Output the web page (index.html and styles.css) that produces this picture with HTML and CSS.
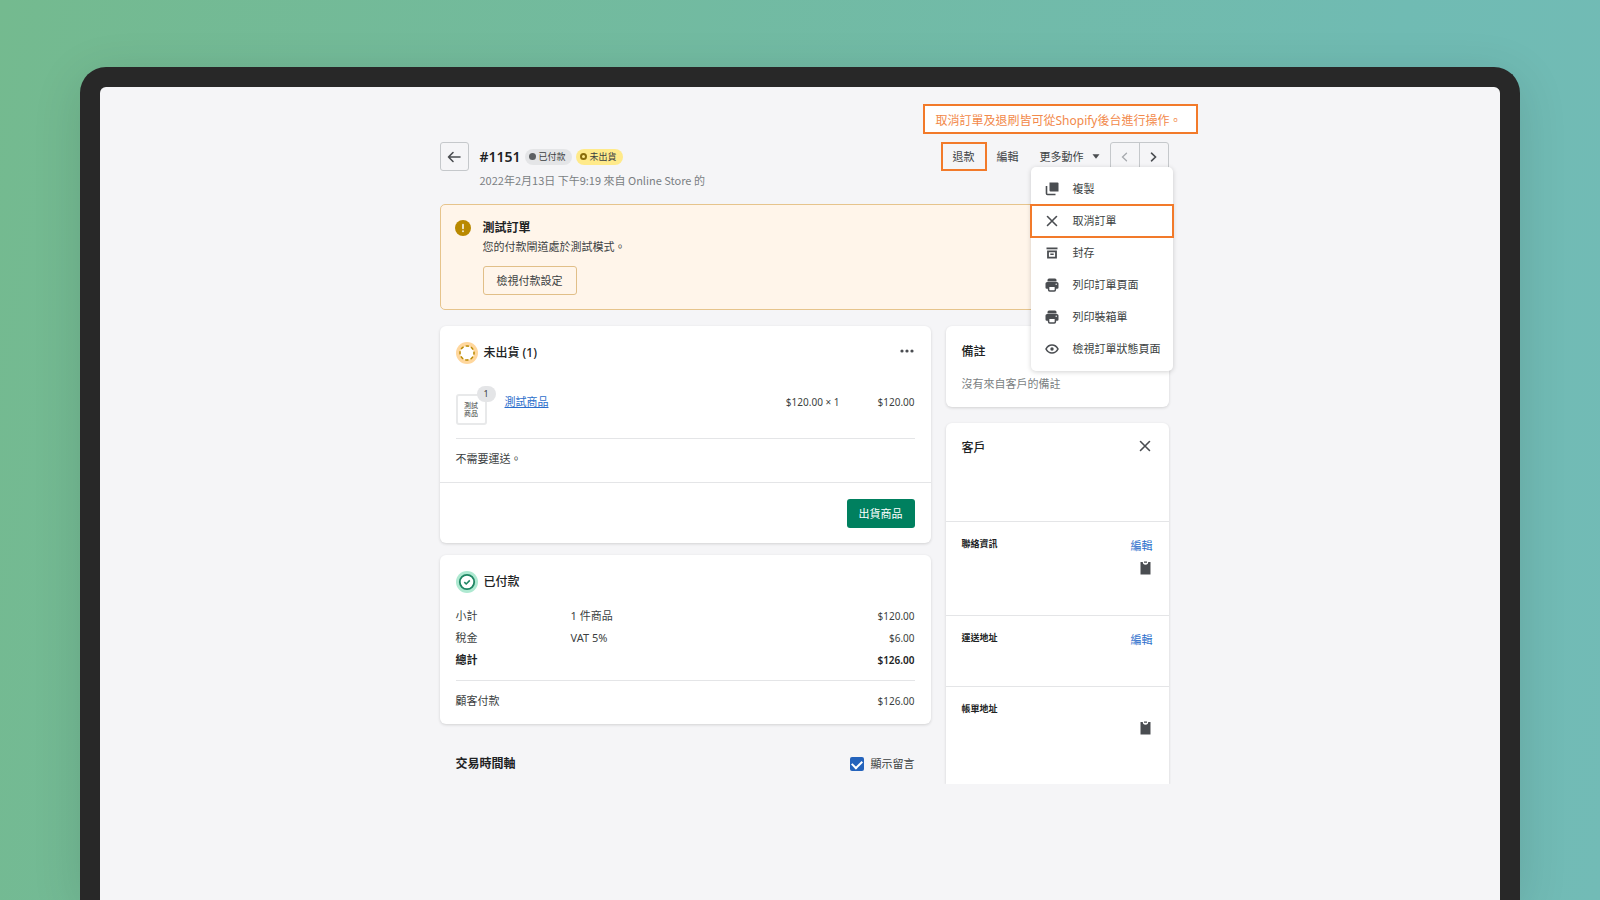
FILE: index.html
```
<!DOCTYPE html>
<html lang="zh-TW">
<head>
<meta charset="utf-8">
<meta name="viewport" content="width=device-width, initial-scale=1">
<title>#1151</title>
<link rel="stylesheet" href="styles.css">
</head>
<body>
<svg class="sprite" aria-hidden="true">
  <symbol id="i-print" viewBox="0 0 14 14"><path d="M4 .5h6A1.500 1.500 0 0 1 11.500 2v1.500h-9V2A1.500 1.500 0 0 1 4 .5z" fill="#4a4d51"/><path d="M2.200 3.900h9.600A1.700 1.700 0 0 1 13.500 5.600v3.900a1.200 1.200 0 0 1-1.200 1.200H1.700A1.200 1.200 0 0 1 .5 9.500V5.600a1.700 1.700 0 0 1 1.700-1.700z" fill="#4a4d51"/><path d="M3.600 8.300h6.800v3.500a1.200 1.200 0 0 1-1.200 1.200H4.800a1.200 1.200 0 0 1-1.200-1.200z" fill="#fff" stroke="#4a4d51" stroke-width="1.500"/><circle cx="11.200" cy="6.300" r=".7" fill="#fff"/></symbol>
  <symbol id="i-x" viewBox="0 0 12 12"><path d="M1.500 1.500l9 9M10.500 1.500l-9 9" fill="none" stroke="#4a4d51" stroke-width="1.600" stroke-linecap="round"/></symbol>
  <symbol id="i-clip" viewBox="0 0 11 14"><path d="M.5 1h2.300a2.700 2.700 0 0 0 5.400 0h2.300v12.500H.5z" fill="#4a4d51"/><path d="M4 .5h3v1.300H4z" fill="#4a4d51"/></symbol>
</svg>
<div class="device">
  <main class="order">
    <p class="callout">取消訂單及退刷皆可從Shopify後台進行操作。</p>

    <header class="head">
      <button class="square" aria-label="返回"><svg width="14" height="12" viewBox="0 0 14 12"><path d="M13 6H1.500M6 1.500L1.500 6 6 10.500" fill="none" stroke="#4a4d51" stroke-width="1.600" stroke-linecap="round" stroke-linejoin="round"/></svg></button>
      <div class="head-text">
        <div class="title-row">
          <h1>#1151</h1>
          <span class="badge"><i class="dot"></i>已付款</span>
          <span class="badge badge-warn"><i class="dot ring"></i>未出貨</span>
        </div>
        <p class="meta">2022年2月13日 下午9:19 來自 Online Store 的</p>
      </div>
      <div class="actions">
        <button class="plain marked">退款</button>
        <button class="plain">編輯</button>
        <button class="plain more">更多動作<svg width="8" height="5" viewBox="0 0 8 5"><path d="M.5.300h7L4 4.700z" fill="#4a4d51"/></svg></button>
        <div class="pager">
          <button aria-label="上一筆"><svg width="7" height="10" viewBox="0 0 7 10"><path d="M5.500 1.200L1.500 5l4 3.800" fill="none" stroke="#a6a9ad" stroke-width="1.300" stroke-linecap="round"/></svg></button>
          <button aria-label="下一筆"><svg width="7" height="10" viewBox="0 0 7 10"><path d="M1.500 1.200L5.500 5l-4 3.800" fill="none" stroke="#4a4d51" stroke-width="1.600" stroke-linecap="round"/></svg></button>
        </div>
        <div class="menu">
          <button><svg width="14" height="14" viewBox="0 0 14 14"><path d="M4.500.5h8a1 1 0 0 1 1 1v8h-8a1 1 0 0 1-1-1z" fill="#4a4d51"/><path d="M1.500 4v7.500a1 1 0 0 0 1 1H10.500" fill="none" stroke="#4a4d51" stroke-width="1.600"/></svg>複製</button>
          <button class="marked"><svg width="12" height="12"><use href="#i-x"/></svg>取消訂單</button>
          <button><svg width="12" height="12" viewBox="0 0 12 12"><path d="M.5.5h11v1.800H.5z" fill="#4a4d51"/><path d="M2 4.300h8v6.400H2z" fill="none" stroke="#4a4d51" stroke-width="1.800"/><path d="M4.300 6.500h3.400V8H4.300z" fill="#4a4d51"/></svg>封存</button>
          <button><svg width="14" height="14"><use href="#i-print"/></svg>列印訂單頁面</button>
          <button><svg width="14" height="14"><use href="#i-print"/></svg>列印裝箱單</button>
          <button><svg width="14" height="10" viewBox="0 0 14 10"><path d="M1 5c1.400-2.700 3.500-4 6-4s4.600 1.300 6 4c-1.400 2.700-3.500 4-6 4S2.400 7.700 1 5z" fill="none" stroke="#4a4d51" stroke-width="1.600"/><circle cx="7" cy="5" r="1.700" fill="#4a4d51"/></svg>檢視訂單狀態頁面</button>
        </div>
      </div>
    </header>

    <section class="banner">
      <svg width="16" height="16" viewBox="0 0 16 16"><circle cx="8" cy="8" r="8" fill="#b98900"/><path d="M8 4.500v4M8 11v.4" stroke="#fff" stroke-width="1.500" stroke-linecap="round"/></svg>
      <div>
        <h2>測試訂單</h2>
        <p>您的付款閘道處於測試模式。</p>
        <button class="outline">檢視付款設定</button>
      </div>
    </section>

    <div class="columns">
      <div class="col-main">
        <section class="card items">
          <div class="card-head">
            <svg width="22" height="22" viewBox="0 0 22 22"><circle cx="11" cy="11" r="11" fill="#ffd79d"/><circle cx="11" cy="11" r="7" fill="#fff" stroke="#b98900" stroke-width="1.500" stroke-dasharray="3.300 2.200" stroke-dashoffset="1.600"/></svg>
            <h2>未出貨 (1)</h2>
            <button class="icon-btn" aria-label="更多"><svg width="14" height="4" viewBox="0 0 14 4" fill="#4a4d51"><circle cx="2" cy="2" r="1.600"/><circle cx="7" cy="2" r="1.600"/><circle cx="12" cy="2" r="1.600"/></svg></button>
          </div>
          <div class="product">
            <div class="thumb">測試<br>商品<span class="count">1</span></div>
            <a href="#">測試商品</a>
            <span class="unit">$120.00 × 1</span>
            <span class="sum">$120.00</span>
          </div>
          <p class="ship-note">不需要運送。</p>
          <div class="card-foot"><button class="primary">出貨商品</button></div>
        </section>

        <section class="card paid">
          <div class="card-head">
            <svg width="22" height="22" viewBox="0 0 22 22"><circle cx="11" cy="11" r="11" fill="#aee9d1"/><circle cx="11" cy="11" r="7.200" fill="#fff" stroke="#1f8563" stroke-width="1.800"/><path d="M8.300 11.200l1.900 1.800 3.600-3.600" fill="none" stroke="#1f8563" stroke-width="1.600"/></svg>
            <h2>已付款</h2>
          </div>
          <table>
            <tbody>
              <tr><th scope="row">小計</th><td>1 件商品</td><td>$120.00</td></tr>
              <tr><th scope="row">稅金</th><td>VAT 5%</td><td>$6.00</td></tr>
              <tr class="total"><th scope="row">總計</th><td></td><td>$126.00</td></tr>
            </tbody>
          </table>
          <div class="paid-by"><span>顧客付款</span><span class="sum">$126.00</span></div>
        </section>

        <div class="timeline">
          <h2>交易時間軸</h2>
          <label><input type="checkbox" checked>顯示留言</label>
        </div>
      </div>

      <aside class="col-side">
        <section class="card notes">
          <h2>備註</h2>
          <p>沒有來自客戶的備註</p>
        </section>
        <section class="card customer">
          <div class="block block-name"><h2>客戶</h2><button class="icon-btn" aria-label="移除客戶"><svg width="12" height="12"><use href="#i-x"/></svg></button></div>
          <div class="block block-contact"><h3>聯絡資訊</h3><div class="tools"><a href="#">編輯</a><button class="icon-btn" aria-label="複製聯絡資訊"><svg width="11" height="14"><use href="#i-clip"/></svg></button></div></div>
          <div class="block block-ship"><h3>運送地址</h3><div class="tools"><a href="#">編輯</a></div></div>
          <div class="block block-bill"><h3>帳單地址</h3><div class="tools low"><button class="icon-btn" aria-label="複製帳單地址"><svg width="11" height="14"><use href="#i-clip"/></svg></button></div></div>
        </section>
      </aside>
    </div>
  </main>
</div>
</body>
</html>
```
FILE: styles.css
```
* { box-sizing: border-box; }
body {
  margin: 0;
  min-height: 100vh;
  display: flex;
  flex-direction: column;
  overflow: hidden;
  background: linear-gradient(100deg, #74ba8f 0%, #70bbb3 80%, #72bbb6 100%);
  color: #3c3f42;
  font: 11px/16px "Noto Sans", "Noto Sans CJK TC", sans-serif;
}
h1, h2, h3, p { margin: 0; }
h2 { font-size: 12px; line-height: 16px; font-weight: 500; color: #202223; }
h3 { font-size: 9px; line-height: 16px; font-weight: 700; color: #202223; }
button { margin: 0; padding: 0; border: 0; background: none; font: inherit; color: inherit; }
svg { display: block; flex: none; }
a { color: #2c6ecb; }
.sprite { position: absolute; width: 0; height: 0; }

.device {
  flex: 1;
  margin: 67px 5% 0;
  border: 20px solid #282828;
  border-bottom: 0;
  border-radius: 26px 26px 0 0;
  background: #f5f5f7;
  box-shadow: 0 10px 50px rgba(0, 0, 0, .12);
}
.order { max-width: 737px; margin: 0 auto; padding: 17px 0 0 8px; }

.callout {
  width: fit-content;
  margin: 0 -29px 0 auto;
  padding: 7px 14px 3px 11px;
  border: 2px solid #f27a2a;
  background: #fff;
  color: #f2894a;
  font-size: 12px;
  line-height: 16px;
}

.head { display: flex; align-items: flex-start; margin-top: 8px; }
.square {
  width: 29px; height: 29px;
  display: grid; place-items: center;
  border: 1px solid #c5c8cb; border-radius: 3px;
}
.head-text { flex: 1; margin-left: 11px; }
.title-row { display: flex; align-items: center; gap: 4px; height: 29px; }
h1 { font-size: 14px; line-height: 20px; font-weight: 600; color: #202223; }
.badge {
  display: flex; align-items: center; gap: 3px;
  height: 16px; padding: 0 6px 0 4px;
  border-radius: 8px;
  background: #e4e5e7;
  font-size: 9px;
}
.badge-warn { background: #ffea8a; }
.dot { width: 7px; height: 7px; border-radius: 50%; background: #5c5f62; }
.ring { background: none; border: 2px solid #8a6d0a; }
.meta { margin-top: 1px; color: #7b7f83; font-family: "Noto Sans CJK TC", sans-serif; }

.actions { position: relative; display: flex; align-items: flex-start; }
.plain { height: 29px; padding: 0 10px; }
.plain.marked { width: 46px; border: 2px solid #f27a2a; }
.more { display: flex; align-items: center; gap: 8px; margin-left: 1px; }
.pager { display: flex; border: 1px solid #c5c8cb; border-radius: 3px; }
.pager button { width: 28px; height: 27px; display: grid; place-items: center; }
.pager button + button { width: 29px; border-left: 1px solid #c5c8cb; }
.menu {
  position: absolute; top: 25px; right: -4px; z-index: 2;
  width: 142px; padding: 6px 0;
  border-radius: 5px;
  background: #fff;
  box-shadow: 0 1px 5px rgba(0, 0, 0, .18);
}
.menu button {
  display: grid; grid-template-columns: 42px 1fr; align-items: center;
  width: 100%; height: 32px;
  text-align: left;
}
.menu svg { justify-self: center; }
.menu .marked { outline: 2px solid #f27a2a; outline-offset: -1px; }

.banner {
  display: flex; gap: 12px;
  margin-top: 16px; padding: 15px 14px 14px;
  border: 1px solid #e6c48c; border-radius: 5px;
  background: #fff5ea;
}
.banner h2, .timeline h2 { font-weight: 600; }
.banner p { margin-top: 3px; }
.outline {
  height: 29px; margin-top: 11px; padding: 0 13px;
  border: 1px solid #e1bf88; border-radius: 3px;
}

.columns { display: grid; grid-template-columns: minmax(0, 491fr) minmax(0, 223fr); gap: 15px; margin-top: 16px; }
.card {
  border-radius: 6px;
  background: #fff;
  box-shadow: 0 1px 3px rgba(23, 24, 24, .16);
}
.card-head { display: flex; align-items: center; gap: 6px; }
.icon-btn { display: block; }
.card-head .icon-btn { margin: 0 1px 4px auto; }

.items .card-head { padding: 16px 16px 0; }
.product {
  display: flex; align-items: flex-start;
  margin: 22px 16px 0; padding: 8px 0 13px;
  border-bottom: 1px solid #e4e5e7;
}
.thumb {
  position: relative;
  width: 31px; height: 31px; margin-right: 18px; padding-top: 6px;
  border: 2px solid #e8e9ea; border-radius: 3px;
  font-size: 7px; line-height: 8px; text-align: center;
}
.count {
  position: absolute; top: -10px; right: -11px;
  width: 19px; height: 16px; border-radius: 8px;
  background: #e4e5e7;
  font-size: 9px; line-height: 16px;
}
.unit { margin-left: auto; }
.unit, .sum { font-size: 10px; }
.sum { width: 75px; text-align: right; }
.ship-note { padding: 12px 16px 15px; }
.card-foot { display: flex; justify-content: flex-end; padding: 16px 16px 15px; border-top: 1px solid #e4e5e7; }
.primary { height: 29px; padding: 0 12px; border-radius: 3px; background: #00805f; color: #fff; }

.paid { margin-top: 12px; padding: 16px 16px 15px; }
table { width: 100%; margin-top: 12px; border-collapse: collapse; table-layout: fixed; }
th, td { height: 22px; padding: 0; text-align: left; font-weight: 400; }
th { width: 115px; }
td:last-child { text-align: right; font-size: 10px; }
.total th, .total td { font-weight: 600; color: #202223; }
.paid-by { display: flex; justify-content: space-between; margin-top: 9px; padding-top: 12px; border-top: 1px solid #e4e5e7; }

.timeline { display: flex; justify-content: space-between; padding: 32px 16px 0; }
label { display: flex; align-items: center; gap: 7px; }
input {
  appearance: none;
  width: 14px; height: 14px; margin: 0;
  border-radius: 2px;
  background: #2463bc;
  display: grid; place-items: center;
}
input:checked::before {
  content: "";
  width: 8px; height: 5px; margin-top: -2px;
  border: solid #fff; border-width: 0 0 2px 2px;
  transform: rotate(-45deg);
}

.notes { padding: 18px 16px 15px; }
.notes p { margin-top: 16px; color: #7b7f83; }
.customer { margin-top: 16px; border-radius: 6px 6px 0 0; clip-path: inset(-3px -3px 0 -3px); }
.block { display: flex; justify-content: space-between; align-items: flex-start; padding: 14px 16px; }
.block + .block { border-top: 1px solid #e4e5e7; }
.block-name { min-height: 98px; padding-top: 17px; }
.block-name .icon-btn { margin-right: 2px; }
.block-contact { min-height: 94px; }
.block-ship { min-height: 71px; }
.block-bill { min-height: 98px; }
.tools { display: flex; flex-direction: column; align-items: flex-end; gap: 7px; padding-top: 2px; }
.tools a { text-decoration: none; }
.tools .icon-btn { margin-right: 2px; }
.low { padding-top: 20px; }
```
